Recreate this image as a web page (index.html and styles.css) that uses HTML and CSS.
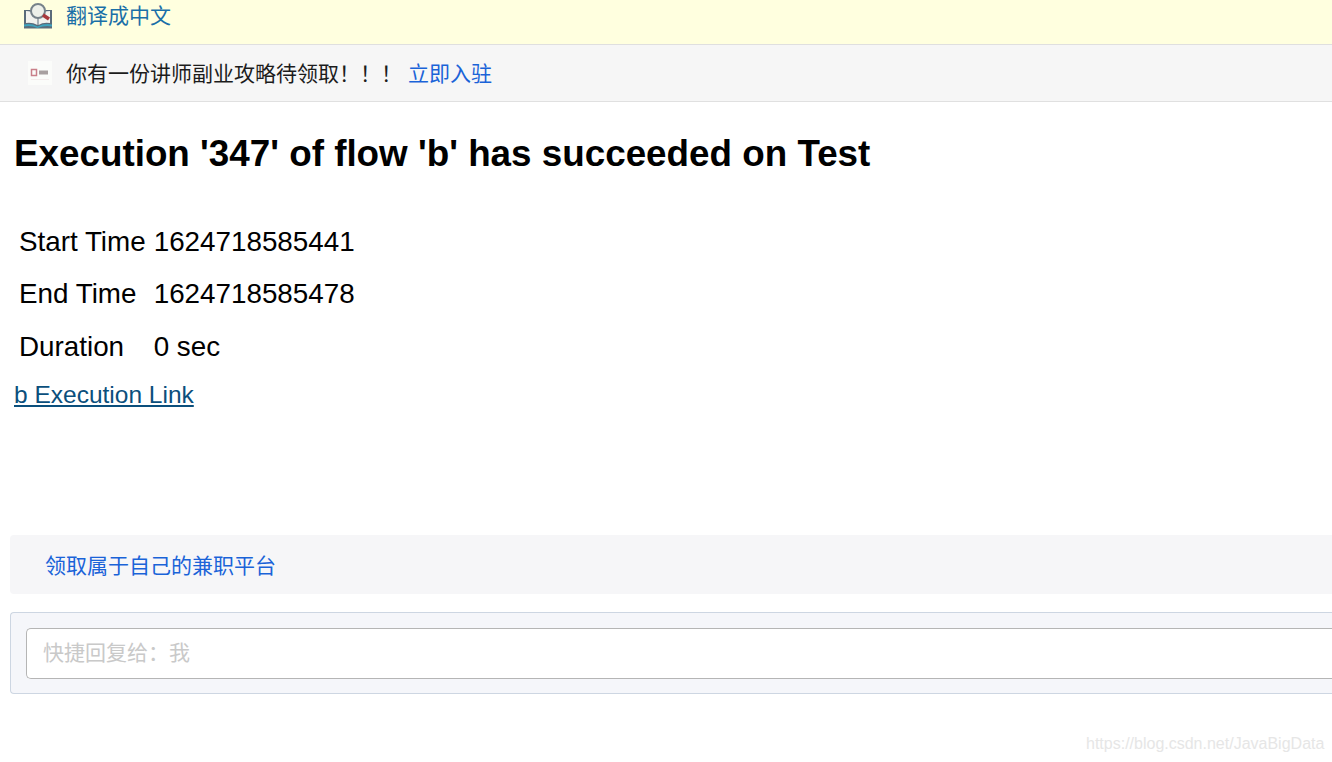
FILE: index.html
```html
<!DOCTYPE html>
<html lang="zh">
<head>
<meta charset="utf-8">
<title>Execution</title>
<link rel="stylesheet" href="styles.css">
</head>
<body>
<div class="translate-bar">
  <svg class="book-icon" width="30" height="29" viewBox="0 0 30 29">
    <path d="M1 9 L29 9 L29 27.500 L1 27.500Z" fill="#5a6b7a"/>
    <path d="M3 10 Q9 10 14.500 14 L14.500 24 Q9 21 3 22Z" fill="#f2f2ee"/>
    <path d="M27 10 Q20 10 15.500 14 L15.500 24 Q20 21 27 22Z" fill="#f2f2ee"/>
    <path d="M1 23.500 Q8 22 14.500 25.500 Q22 22 29 23.500 L29 25.500 Q22 24 14.500 27 Q8 24 1 25.500Z" fill="#3fa3bd"/>
    <circle cx="15" cy="10" r="7" fill="#eef0ea" stroke="#77828a" stroke-width="2"/>
    <path d="M20 14 L26 18" stroke="#a8383c" stroke-width="3.500"/>
  </svg>
  <a class="translate-link">翻译成中文</a>
</div>
<div class="notice-bar">
  <svg class="notice-logo" width="24" height="24" viewBox="0 0 24 24">
    <rect width="24" height="24" fill="#fbfcfa"/>
    <rect x="3.500" y="8.500" width="5" height="6" fill="none" stroke="#c9808a" stroke-width="1.500"/>
    <rect x="11" y="9.500" width="9" height="4" fill="#a8a0a0"/>
    <rect x="3" y="18" width="18" height="1" fill="#f4ecec"/>
  </svg>
  <span class="notice-text">你有一份讲师副业攻略待领取！！！</span>
  <a class="notice-link">立即入驻</a>
</div>
<main class="mail">
  <h1 class="mail-title">Execution '347' of flow 'b' has succeeded on Test</h1>
  <table class="mail-table">
    <tr><td>Start Time</td><td>1624718585441</td></tr>
    <tr><td>End Time</td><td>1624718585478</td></tr>
    <tr><td>Duration</td><td>0 sec</td></tr>
  </table>
  <a class="exec-link">b Execution Link</a>
</main>
<div class="promo"><a class="promo-link">领取属于自己的兼职平台</a></div>
<div class="reply">
  <div class="reply-input">快捷回复给：我</div>
</div>
<div class="watermark">https://blog.csdn.net/JavaBigData</div>
</body>
</html>
```
FILE: styles.css
```css
* { box-sizing: border-box; }
html, body { margin: 0; padding: 0; height: 762px; overflow: hidden; background: #fff; }
body { font-family: "Liberation Sans", "Noto Sans CJK SC", sans-serif; position: relative; }
.translate-bar { height: 45px; background: #ffffdf; border-bottom: 1px solid #dfdfdf; display: flex; align-items: flex-start; padding: 1px 0 0 23px; font-size: 21px; }
.book-icon { flex: none; }
.translate-link { color: #1a6fa8; margin-left: 13px; line-height: 30px; }
.notice-bar { height: 57px; background: #f6f6f6; border-bottom: 1px solid #e0e0e0; display: flex; align-items: center; padding: 0 0 2px 28px; font-size: 21px; }
.notice-logo { flex: none; margin-top: 2px; }
.notice-text { margin-left: 14px; color: #1c1c1c; }
.notice-link { margin-left: 6px; color: #1a63d8; }
.mail { padding: 0 14px; height: 433px; color: #000; }
.mail-title { margin: 0; padding-top: 31px; font-size: 36.800px; line-height: 42px; font-weight: 700; }
.mail-table { border-collapse: separate; border-spacing: 2px; margin-top: 39px; font-size: 27.800px; }
.mail-table td { line-height: 49px; height: 50.500px; padding: 0 3px; white-space: nowrap; }
.exec-link { display: block; margin-top: 7px; font-size: 24.500px; line-height: 28px; color: #0b4f7c; text-decoration: underline; }
.promo { margin-left: 10px; height: 59px; background: #f6f6f8; border-radius: 4px 0 0 4px; display: flex; align-items: center; padding: 0 0 2px 35px; font-size: 21px; }
.promo-link { color: #1a63d8; }
.reply { margin: 18px 0 0 10px; height: 82px; background: #f5f6fa; border: 1px solid #cdd6e2; border-right: 0; border-radius: 4px 0 0 4px; padding: 15px 0 0 15px; }
.reply-input { height: 51px; background: #fff; border: 1px solid #b5b5b5; border-right: 0; border-radius: 5px 0 0 5px; padding-left: 16px; line-height: 47px; font-size: 21px; color: #c9c9c9; }
.watermark { position: absolute; left: 1086px; top: 734px; font-size: 16px; line-height: 20px; color: #e6e6e6; }
```
